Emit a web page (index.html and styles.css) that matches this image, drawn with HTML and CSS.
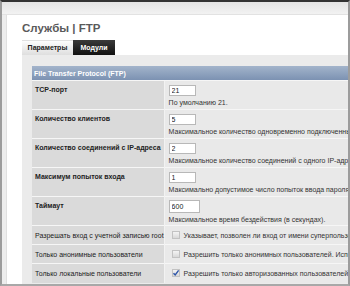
FILE: index.html
```html
<!DOCTYPE html>
<html lang="ru">
<head>
    <meta charset="UTF-8">
    <title>Службы | FTP</title>
    <link rel="stylesheet" href="styles.css">
</head>
<body>
    <div class="window">
        <div class="topbar"></div>
        <div class="content">
            <h1>Службы | FTP</h1>
            <div class="tabs">
                <span class="tab">Параметры</span>
                <span class="tab active">Модули</span>
            </div>
            <div class="panel">
                <table class="settings">
                    <tr>
                        <th colspan="2">File Transfer Protocol (FTP)</th>
                    </tr>
                    <tr>
                        <td class="label bold">TCP-порт</td>
                        <td class="value">
                            <input type="text" value="21">
                            <div class="desc">По умолчанию 21.</div>
                        </td>
                    </tr>
                    <tr>
                        <td class="label bold">Количество клиентов</td>
                        <td class="value">
                            <input type="text" value="5">
                            <div class="desc">Максимальное количество одновременно подключенных клиентов.</div>
                        </td>
                    </tr>
                    <tr>
                        <td class="label bold">Количество соединений с IP-адреса</td>
                        <td class="value">
                            <input type="text" value="2">
                            <div class="desc">Максимальное количество соединений с одного IP-адреса.</div>
                        </td>
                    </tr>
                    <tr>
                        <td class="label bold">Максимум попыток входа</td>
                        <td class="value">
                            <input type="text" value="1">
                            <div class="desc">Максимально допустимое число попыток ввода пароля.</div>
                        </td>
                    </tr>
                    <tr>
                        <td class="label bold">Таймаут</td>
                        <td class="value tall">
                            <input type="text" class="wide" value="600">
                            <div class="desc">Максимальное время бездействия (в секундах).</div>
                        </td>
                    </tr>
                    <tr class="check-row">
                        <td class="label">Разрешать вход с учетной записью root</td>
                        <td class="value">
                            <span class="checkbox"></span>Указывает, позволен ли вход от имени суперпользователя root.
                        </td>
                    </tr>
                    <tr class="check-row">
                        <td class="label">Только анонимные пользователи</td>
                        <td class="value">
                            <span class="checkbox"></span>Разрешить только анонимных пользователей. Используйте для публичных серверов.
                        </td>
                    </tr>
                    <tr class="check-row">
                        <td class="label">Только локальные пользователи</td>
                        <td class="value">
                            <span class="checkbox checked">
                                <svg width="8" height="8" viewBox="0 0 8 8"><path d="M1.5 4.2 L3.2 6 L6.6 1.4" fill="none" stroke="#2d55a8" stroke-width="1.4"/></svg>
                            </span>Разрешить только авторизованных пользователей системы.
                        </td>
                    </tr>
                </table>
            </div>
        </div>
    </div>
</body>
</html>
```

FILE: styles.css
```css
html, body { margin: 0; padding: 0; }
body { font-family: "Liberation Sans", Arial, sans-serif; background: #fff; overflow: hidden; }

.window {
    width: 350px; height: 286px;
    box-sizing: border-box;
    border-top: 2px solid #333;
    border-left: 2px solid #9c9c9c;
    border-right: 2px solid #9c9c9c;
    border-bottom: 2px solid #a8a8a8;
    background: #ededed;
    padding-left: 4px;
    display: flex; flex-direction: column;
    overflow: hidden;
}
.topbar {
    height: 12px; flex: none;
    margin-left: -4px;
    background: linear-gradient(#e4e4e4, #f2f2f2);
    border-bottom: 1px solid #e2e2e2;
}
.content {
    flex: 1;
    background: #fff;
    border-left: 1px solid #e0e0e0;
    padding: 6px 0 0 15px;
    overflow: hidden;
}

h1 {
    margin: 0 0 5px 0;
    height: 14px; line-height: 14px;
    font-size: 11.5px; font-weight: bold;
    color: #5a5a5a;
}

.tabs { display: flex; height: 15px; }
.tab {
    font-size: 7px; font-weight: bold;
    line-height: 15px;
    text-align: center;
    color: #222;
}
.tab:first-child {
    width: 51px;
    background: linear-gradient(#fdfdfd, #dedede);
    border-top: 1px solid #e0e0e0;
    line-height: 14px;
}
.tab.active {
    width: 42px;
    background: linear-gradient(#3a3a3a, #111);
    color: #fff;
}

.panel {
    background: #ebebeb;
    padding: 11px 0 0 10px;
    height: 240px;
}

.settings {
    border-collapse: collapse;
    width: 420px;
    font-size: 7px;
    color: #222;
}
.settings th {
    height: 14px; padding: 0 0 0 2px;
    text-align: left;
    color: #fff; font-weight: bold;
    background: linear-gradient(#a3b4cb, #7c92b2);
}
.settings td {
    border-top: 1px solid #f6f6f6;
    white-space: nowrap;
    vertical-align: top;
}
.label {
    width: 143px;
    background: #dadada;
    padding: 4px 0 0 3px;
    line-height: 9px;
}
.bold { font-weight: bold; }
.value {
    background: #e9e9e9;
    border-left: 1px solid #f2f2f2;
    padding: 4px 0 2px 4px;
}
.value.tall { padding-top: 3px; padding-bottom: 1px; }
.value input {
    display: block;
    width: 27px; height: 11px;
    box-sizing: border-box;
    border: 1px solid #b8b8b8;
    background: #fff;
    padding: 0 2px;
    font: 7px "Liberation Sans", Arial, sans-serif;
    color: #222;
}
.value input.wide { width: 31px; height: 13px; }
.desc { margin-top: 2px; line-height: 9px; color: #333; }

.check-row td { height: 19px; padding-top: 0; padding-bottom: 0; vertical-align: middle; box-sizing: border-box; }
.check-row .label { padding-top: 0; }
.check-row .value { color: #333; }
.checkbox {
    display: inline-block;
    width: 8px; height: 8px;
    box-sizing: border-box;
    border: 1px solid #c2c2c2;
    background: linear-gradient(#f4f4f4, #d8d8d8);
    margin: 0 4px 0 3px;
    vertical-align: -1px;
    position: relative;
}
.checkbox svg { position: absolute; left: -1px; top: -1px; }
```
